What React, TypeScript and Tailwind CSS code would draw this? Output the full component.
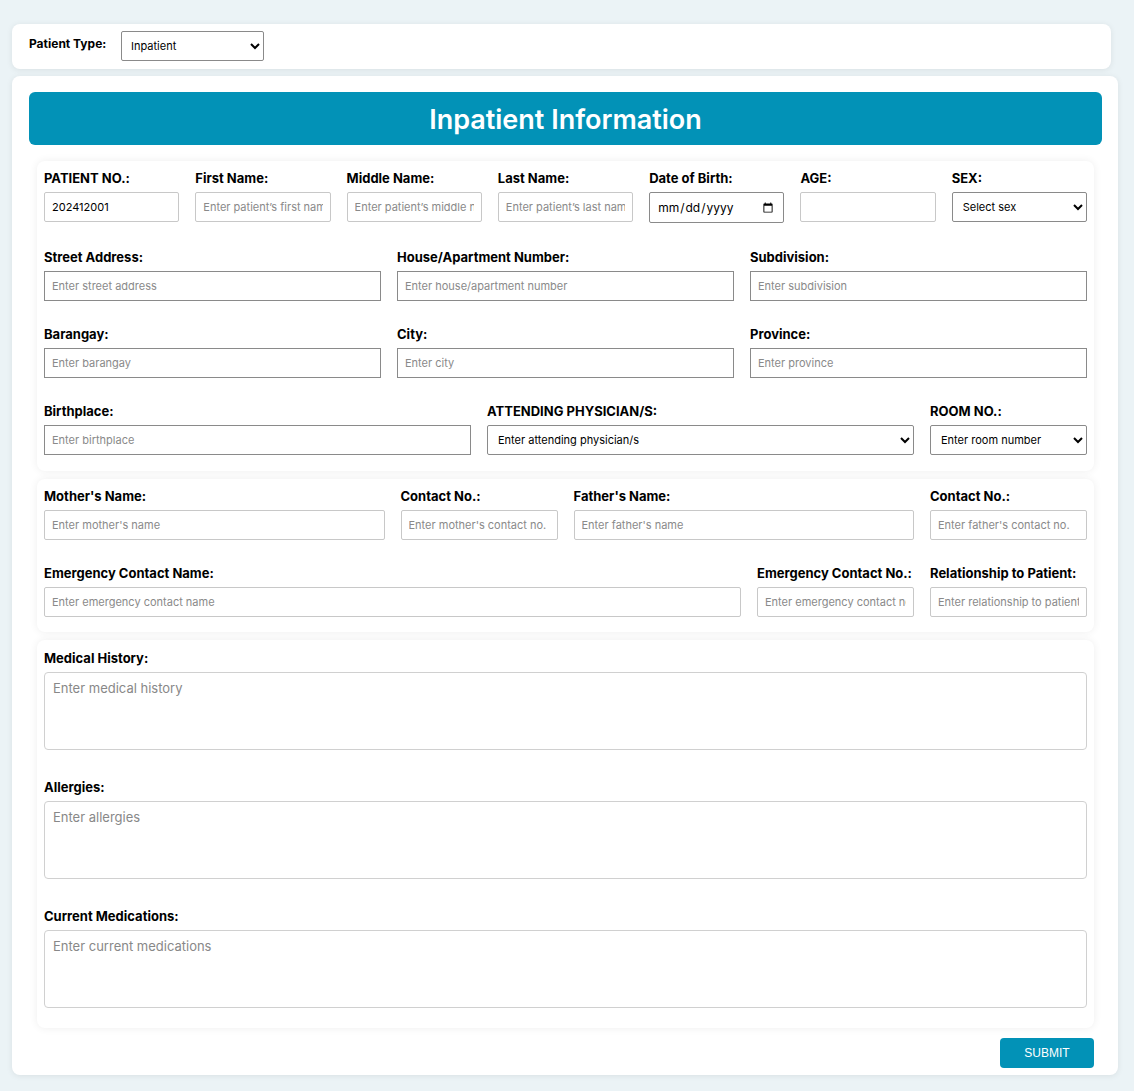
import type { ReactNode } from 'react'

const LABEL = 'block text-[13px] leading-5 font-bold text-black mb-[4px] whitespace-nowrap'
const INPUT =
  'block w-full h-[30px] px-[7px] text-[11px] text-black bg-white border border-[#8a8a8a] outline-none placeholder:text-[#8a8a8a]'
const INPUT_LIGHT =
  'block w-full h-[30px] px-[7px] text-[11px] text-black bg-white border border-[#c8c8c8] rounded-[2px] outline-none placeholder:text-[#8a8a8a]'
const SELECT =
  'block w-full h-[30px] pl-[6px] pr-1 text-[11px] text-black bg-white border border-[#8a8a8a] rounded-[2px] outline-none'
const TEXTAREA =
  'block w-full h-[78px] px-[8px] py-[6px] text-[13px] text-black bg-white border border-[#d0d0d0] rounded-[4px] resize-none outline-none placeholder:text-[#888]'

function Field({ label, children }: { label: string; children: ReactNode }) {
  return (
    <div className="min-w-0">
      <label className={LABEL}>{label}</label>
      {children}
    </div>
  )
}

function Section({ className, children }: { className?: string; children: ReactNode }) {
  return (
    <div
      className={[
        'mx-2 bg-white rounded-lg shadow-[0_0_8px_rgba(0,0,0,0.07)] px-[7px]',
        className ?? '',
      ].join(' ')}
    >
      {children}
    </div>
  )
}

export default function App() {
  return (
    <div
      className="min-h-[1091px] bg-[#ebf3f6] pt-6 pl-3 pb-4"
      style={{ fontFamily: 'Inter, "Open Sans", sans-serif' }}
    >
      {/* Patient type bar */}
      <div className="w-[1099px] h-[45px] bg-white rounded-lg shadow-[0_1px_6px_rgba(0,0,0,0.08)] flex items-start pt-[7px] pl-[17px]">
        <span className="w-[92px] mt-[3px] text-[12px] leading-5 font-bold text-black">Patient Type:</span>
        <select className="w-[143px] h-[30px] pl-[5px] pr-1 text-[11px] text-black bg-white border border-[#8a8a8a] rounded-[2px] outline-none">
          <option>Inpatient</option>
          <option>Outpatient</option>
        </select>
      </div>

      {/* Main form card */}
      <div className="mt-[7px] w-[1106px] bg-white rounded-lg shadow-[0_1px_6px_rgba(0,0,0,0.08)] pl-[17px] pr-4 pt-4 pb-[7px]">
        <div className="h-[53px] bg-[#0292b7] rounded-[6px] flex items-center justify-center pt-[3px]">
          <h1 className="text-[27px] leading-8 font-semibold text-white">Inpatient Information</h1>
        </div>

        <div className="mt-4 flex flex-col gap-2">
          {/* Personal info */}
          <Section className="pt-[7px] pb-4">
            <div className="grid grid-cols-7 gap-x-4">
              <Field label="PATIENT NO.:">
                <input className={INPUT_LIGHT} defaultValue="202412001" />
              </Field>
              <Field label="First Name:">
                <input className={INPUT_LIGHT} placeholder="Enter patient’s first name" />
              </Field>
              <Field label="Middle Name:">
                <input className={INPUT_LIGHT} placeholder="Enter patient’s middle name" />
              </Field>
              <Field label="Last Name:">
                <input className={INPUT_LIGHT} placeholder="Enter patient’s last name" />
              </Field>
              <Field label="Date of Birth:">
                <input type="date" className={INPUT + ' h-[31px] rounded-[2px] text-[12px]'} />
              </Field>
              <Field label="AGE:">
                <input className={INPUT_LIGHT} />
              </Field>
              <Field label="SEX:">
                <select className={SELECT + ' h-[29px]'}>
                  <option>Select sex</option>
                  <option>Male</option>
                  <option>Female</option>
                </select>
              </Field>
            </div>

            <div className="mt-6 grid grid-cols-3 gap-x-4">
              <Field label="Street Address:">
                <input className={INPUT} placeholder="Enter street address" />
              </Field>
              <Field label="House/Apartment Number:">
                <input className={INPUT} placeholder="Enter house/apartment number" />
              </Field>
              <Field label="Subdivision:">
                <input className={INPUT} placeholder="Enter subdivision" />
              </Field>
            </div>

            <div className="mt-[23px] grid grid-cols-3 gap-x-4">
              <Field label="Barangay:">
                <input className={INPUT} placeholder="Enter barangay" />
              </Field>
              <Field label="City:">
                <input className={INPUT} placeholder="Enter city" />
              </Field>
              <Field label="Province:">
                <input className={INPUT} placeholder="Enter province" />
              </Field>
            </div>

            <div className="mt-[23px] grid grid-cols-[1fr_1fr_157px] gap-x-4">
              <Field label="Birthplace:">
                <input className={INPUT} placeholder="Enter birthplace" />
              </Field>
              <Field label="ATTENDING PHYSICIAN/S:">
                <select className={SELECT}>
                  <option>Enter attending physician/s</option>
                </select>
              </Field>
              <Field label="ROOM NO.:">
                <select className={SELECT}>
                  <option>Enter room number</option>
                </select>
              </Field>
            </div>
          </Section>

          {/* Parents / emergency */}
          <Section className="pt-[7px] pb-[15px]">
            <div className="grid grid-cols-[1fr_157px_1fr_157px] gap-x-4">
              <Field label="Mother's Name:">
                <input className={INPUT_LIGHT + ' border-[#a0a0a0]'} placeholder="Enter mother's name" />
              </Field>
              <Field label="Contact No.:">
                <input className={INPUT_LIGHT} placeholder="Enter mother's contact no." />
              </Field>
              <Field label="Father's Name:">
                <input className={INPUT_LIGHT + ' border-[#a0a0a0]'} placeholder="Enter father's name" />
              </Field>
              <Field label="Contact No.:">
                <input className={INPUT_LIGHT} placeholder="Enter father's contact no." />
              </Field>
            </div>

            <div className="mt-[23px] grid grid-cols-[1fr_157px_157px] gap-x-4">
              <Field label="Emergency Contact Name:">
                <input className={INPUT_LIGHT + ' border-[#a0a0a0]'} placeholder="Enter emergency contact name" />
              </Field>
              <Field label="Emergency Contact No.:">
                <input className={INPUT_LIGHT + ' border-[#a0a0a0]'} placeholder="Enter emergency contact no." />
              </Field>
              <Field label="Relationship to Patient:">
                <input className={INPUT_LIGHT + ' border-[#a0a0a0]'} placeholder="Enter relationship to patient" />
              </Field>
            </div>
          </Section>

          {/* Medical */}
          <Section className="pt-[8px] pb-5">
            <Field label="Medical History:">
              <textarea className={TEXTAREA} placeholder="Enter medical history" />
            </Field>
            <div className="mt-[27px]">
              <Field label="Allergies:">
                <textarea className={TEXTAREA} placeholder="Enter allergies" />
              </Field>
            </div>
            <div className="mt-[27px]">
              <Field label="Current Medications:">
                <textarea className={TEXTAREA} placeholder="Enter current medications" />
              </Field>
            </div>
          </Section>
        </div>

        <div className="mt-[10px] flex justify-end mr-2">
          <button
            className="w-[94px] h-[30px] bg-[#0292b7] text-white text-[12px] rounded-[4px]"
            style={{ fontFamily: '"Liberation Sans", Arial, sans-serif' }}
          >
            SUBMIT
          </button>
        </div>
      </div>
    </div>
  )
}
